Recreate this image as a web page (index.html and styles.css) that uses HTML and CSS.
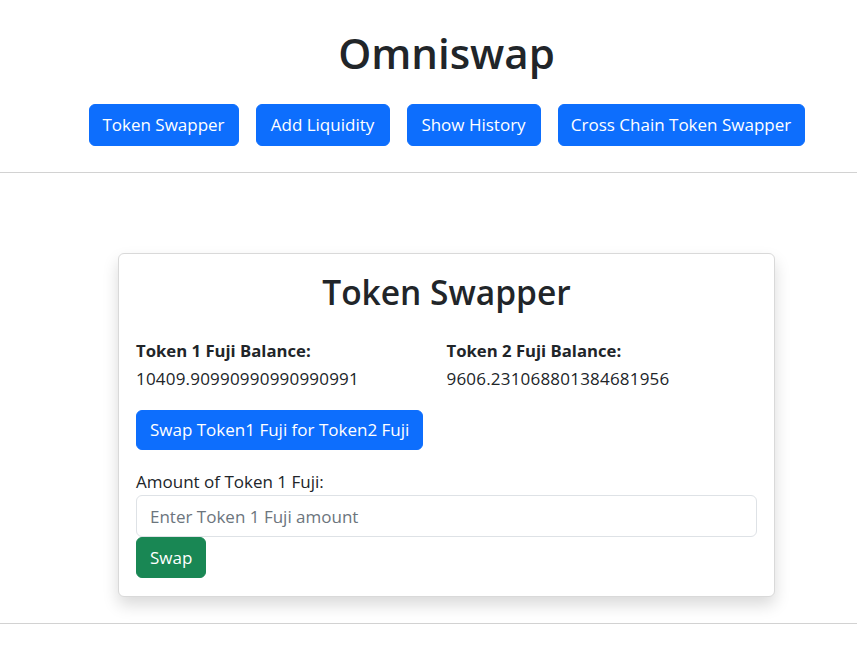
FILE: index.html
```html
<!DOCTYPE html>
<html lang="en">
<head>
<meta charset="utf-8">
<title>Omniswap</title>
<link rel="stylesheet" href="styles.css">
</head>
<body>
<div class="page">
  <header class="header">
    <h1 class="title">Omniswap</h1>
    <nav class="nav">
      <button class="btn btn-primary nav-btn nav-swap">Token Swapper</button>
      <button class="btn btn-primary nav-btn nav-liq">Add Liquidity</button>
      <button class="btn btn-primary nav-btn nav-hist">Show History</button>
      <button class="btn btn-primary nav-btn nav-cross">Cross Chain Token Swapper</button>
    </nav>
  </header>
  <hr class="rule">
  <main class="main">
    <section class="card">
      <h2 class="card-title">Token Swapper</h2>
      <div class="balances">
        <div class="balance">
          <div class="balance-label">Token 1 Fuji Balance:</div>
          <div class="balance-value">10409.90990990990990991</div>
        </div>
        <div class="balance">
          <div class="balance-label">Token 2 Fuji Balance:</div>
          <div class="balance-value">9606.231068801384681956</div>
        </div>
      </div>
      <div class="swap-dir">
        <button class="btn btn-primary dir-btn">Swap Token1 Fuji for Token2 Fuji</button>
      </div>
      <label class="amount-label" for="amt">Amount of Token 1 Fuji:</label>
      <input id="amt" class="input" type="text" placeholder="Enter Token 1 Fuji amount">
      <div><button class="btn btn-success swap-btn">Swap</button></div>
    </section>
  </main>
  <hr class="rule rule-bottom">
</div>
</body>
</html>
```

FILE: styles.css
```css
* { box-sizing: border-box; }
html, body { margin: 0; padding: 0; background: #fff; }
body {
  font-family: "Open Sans", "Noto Sans", sans-serif;
  font-size: 17px;
  line-height: 24px;
  color: #212529;
}
.page { padding-left: 36px; }
.header {
  padding-top: 26px;
  display: flex;
  flex-direction: column;
  align-items: center;
}
.title {
  margin: 0;
  font-size: 42px;
  font-weight: 600;
  line-height: 53px;
}
.nav {
  margin-top: 25px;
  display: flex;
  gap: 17px;
}
.btn {
  font-family: inherit;
  font-size: 17px;
  line-height: 24px;
  border: 1px solid transparent;
  border-radius: 6px;
  color: #fff;
  cursor: pointer;
  padding: 0 12px;
  white-space: nowrap;
  text-align: center;
}
.btn-primary { background: #0d6efd; border-color: #0d6efd; }
.btn-success { background: #198754; border-color: #198754; }
.nav-btn { height: 42px; padding: 0; }
.nav-swap { width: 150px; }
.nav-liq { width: 134px; }
.nav-hist { width: 134px; }
.nav-cross { width: 247px; }
.rule {
  margin: 26px 0 0 -36px;
  border: 0;
  border-top: 1px solid #d2d2d2;
  height: 0;
}
.main {
  display: flex;
  justify-content: center;
  padding-top: 80px;
}
.card {
  width: 657px;
  border: 1px solid #d9d9d9;
  border-radius: 6px;
  background: #fff;
  box-shadow: 0 8px 16px rgba(0,0,0,0.15);
  padding: 17px 17px 18px;
  display: flex;
  flex-direction: column;
}
.card-title {
  margin: 0;
  text-align: center;
  font-size: 33.5px;
  font-weight: 600;
  line-height: 42px;
}
.balances {
  margin-top: 26px;
  display: grid;
  grid-template-columns: 1fr 1fr;
}
.balance-label { font-weight: 700; font-size: 16.7px; }
.balance-value { margin-top: 4px; letter-spacing: 0.2px; }
.swap-dir { margin-top: 19px; }
.dir-btn { height: 40px; padding: 0 13px; }
.amount-label { margin-top: 20px; display: block; }
.input {
  margin-top: 1px;
  width: 100%;
  height: 42px;
  border: 1px solid #dee2e6;
  border-radius: 6px;
  padding: 0 13px;
  font-family: inherit;
  font-size: 17px;
  color: #212529;
  background: #fff;
}
.input::placeholder { color: #6c757d; opacity: 1; }
.swap-btn { height: 41px; padding: 0 13px; }
.rule-bottom { margin-top: 26px; }
```
